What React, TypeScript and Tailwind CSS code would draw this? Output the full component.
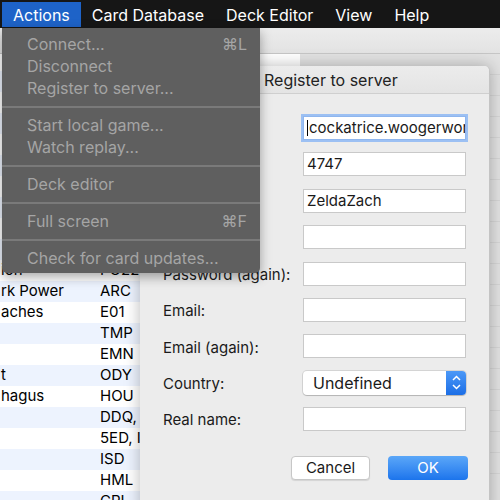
import React from 'react';

const font = { fontFamily: 'Inter, "Liberation Sans", sans-serif' };

const menuBar = ['Actions', 'Card Database', 'Deck Editor', 'View', 'Help'];

type MenuEntry = { label: string; shortcut?: string } | 'sep';

const actionsMenu: MenuEntry[] = [
  { label: 'Connect...', shortcut: '⌘L' },
  { label: 'Disconnect' },
  { label: 'Register to server...' },
  'sep',
  { label: 'Start local game...' },
  { label: 'Watch replay...' },
  'sep',
  { label: 'Deck editor' },
  'sep',
  { label: 'Full screen', shortcut: '⌘F' },
  'sep',
  { label: 'Check for card updates...' },
];

// rows of the card list behind the sheet (only the tail end is visible)
const cards: [string, string][] = [
  ['', ''], ['', ''], ['', ''], ['', ''], ['', ''], ['', ''], ['', ''], ['', ''], ['', ''],
  ['ion', 'PO22'],
  ['rk Power', 'ARC'],
  ['aches', 'E01'],
  ['', 'TMP'],
  ['', 'EMN'],
  ['t', 'ODY'],
  ['hagus', 'HOU'],
  ['', 'DDQ, '],
  ['', '5ED, I'],
  ['', 'ISD'],
  ['', 'HML'],
  ['', 'CPL'],
];

const fields = [
  { label: 'Host:', value: 'cockatrice.woogerworks.com', focus: true },
  { label: 'Port:', value: '4747' },
  { label: 'Player name:', value: 'ZeldaZach' },
  { label: 'Password:', value: '' },
  { label: 'Password (again):', value: '' },
  { label: 'Email:', value: '' },
  { label: 'Email (again):', value: '' },
];

function Stepper() {
  return (
    <div className="w-[20px] h-full rounded-r-[4px] bg-gradient-to-b from-[#4b98f7] to-[#1b6ee6] flex flex-col items-center justify-center gap-[3px]">
      <svg width="9" height="6" viewBox="0 0 9 6">
        <path d="M1 5 L4.5 1.5 L8 5" fill="none" stroke="white" strokeWidth="1.5" />
      </svg>
      <svg width="9" height="6" viewBox="0 0 9 6">
        <path d="M1 1 L4.5 4.5 L8 1" fill="none" stroke="white" strokeWidth="1.5" />
      </svg>
    </div>
  );
}

export default function App() {
  return (
    <div className="relative w-[500px] h-[500px] overflow-hidden bg-white flex flex-col" style={font}>
      {/* Menu bar */}
      <div className="h-[28px] shrink-0 bg-[#161616] flex items-stretch pl-[2px] pt-[2px] pb-[1px]">
        {menuBar.map((m, i) => (
          <div
            key={m}
            className={`px-[11px] flex items-center text-[16px] text-white ${i === 0 ? 'bg-[#1e63c8]' : ''}`}
          >
            {m}
          </div>
        ))}
      </div>

      {/* Window toolbar */}
      <div className="h-[26px] shrink-0 bg-gradient-to-b from-[#ececec] to-[#e3e3e3] border-b border-[#c6c6c6]" />

      {/* Window content */}
      <div className="flex-1 flex min-h-0">
        <div className="w-[300px] flex flex-col">
          <div className="h-[17px] shrink-0 bg-white" />
          {cards.map(([name, set], i) => (
            <div
              key={i}
              className={`h-[21px] shrink-0 flex items-center text-[15px] text-black ${i % 2 === 0 ? 'bg-[#edf3fe]' : 'bg-white'}`}
            >
              <div className="w-[100px] pl-[1px] whitespace-nowrap overflow-hidden">{name}</div>
              <div className="flex-1 whitespace-nowrap">{set}</div>
            </div>
          ))}
        </div>
        <div className="flex-1 bg-[#e2e2e2] flex flex-col">
          {Array.from({ length: 20 }).map((_, i) => (
            <div key={i} className="h-[21px] shrink-0 border-b border-[#d6d6d6]" />
          ))}
        </div>
      </div>

      {/* Register sheet */}
      <div className="absolute left-[140px] top-[66px] w-[350px] h-[450px] bg-[#ececec] rounded-t-[5px] border-r border-[#c4c4c4] shadow-[0_0_16px_rgba(0,0,0,0.28)] flex flex-col">
        <div className="h-[28px] shrink-0 rounded-t-[5px] bg-gradient-to-b from-[#ececec] to-[#e4e4e4] border-b border-[#cfcfcf] flex items-center pl-[124px] text-[16px] text-[#222]">
          Register to server
        </div>
        <div className="pt-[22px] pl-[23px] pr-[24px] grid grid-cols-[140px_163px] gap-y-[12.4px] items-center text-[15px] text-[#1a1a1a]">
          {fields.map((f) => (
            <React.Fragment key={f.label}>
              <div className="h-[24px] flex items-center pt-[3px] whitespace-nowrap">{f.label}</div>
              <div
                className={`h-[24px] bg-white flex items-center overflow-hidden whitespace-nowrap pl-[3px] ${
                  f.focus
                    ? 'border border-[#8fb6ee] ring-[2px] ring-[#9cc0f3]'
                    : 'border border-[#c9c9c9]'
                }`}
              >
                {f.focus && <span className="w-px h-[16px] bg-black mr-[1px] shrink-0" />}
                {f.value}
              </div>
            </React.Fragment>
          ))}
          <div className="h-[24px] flex items-center pt-[3px]">Country:</div>
          <div className="h-[24px] bg-white rounded-[4px] shadow-[0_0_0_1px_rgba(0,0,0,0.1),0_1px_1px_rgba(0,0,0,0.15)] flex items-center justify-between">
            <span className="pl-[10px] text-[16px]">Undefined</span>
            <Stepper />
          </div>
          <div className="h-[24px] flex items-center pt-[3px]">Real name:</div>
          <div className="h-[24px] bg-white border border-[#c9c9c9]" />
        </div>
        <div className="mt-[25px] pr-[21px] flex justify-end gap-[18px] text-[15px]">
          <button className="w-[79px] h-[24px] bg-white rounded-[4px] border border-[#c7c7c7] shadow-[0_1px_1px_rgba(0,0,0,0.1)] text-[#1a1a1a]">
            Cancel
          </button>
          <button className="w-[80px] h-[24px] rounded-[4px] bg-gradient-to-b from-[#5ba7f8] to-[#1b74ec] text-white">
            OK
          </button>
        </div>
      </div>

      {/* Actions dropdown */}
      <div className="absolute left-[2px] top-[28px] w-[258px] h-[245px] bg-[#5f5f5f] rounded-b-[5px] shadow-[0_4px_12px_rgba(0,0,0,0.35)] pt-[5px] text-[16px] text-[#a5a5a5]">
        {actionsMenu.map((e, i) =>
          e === 'sep' ? (
            <div key={i} className="h-[15px] flex items-center">
              <div className="w-full h-[2px] bg-[#7a7a7a]" />
            </div>
          ) : (
            <div key={i} className="h-[22px] flex items-center justify-between pl-[25px] pr-[13px]">
              <span>{e.label}</span>
              {e.shortcut && <span>{e.shortcut}</span>}
            </div>
          )
        )}
      </div>
    </div>
  );
}
